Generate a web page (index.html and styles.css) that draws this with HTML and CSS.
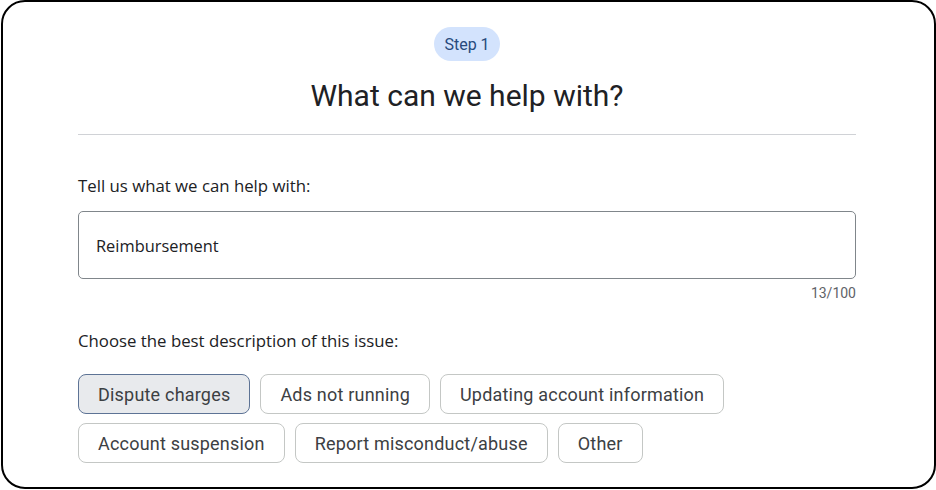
FILE: index.html
```html
<!DOCTYPE html>
<html>
<head>
<meta charset="utf-8">
<link rel="stylesheet" href="styles.css">
</head>
<body>
<div class="frame">
  <div class="header">
    <span class="step">Step 1</span>
    <h1 class="title">What can we help with?</h1>
  </div>
  <div class="content">
    <label class="label">Tell us what we can help with:</label>
    <div class="input">Reimbursement</div>
    <div class="counter">13/100</div>
    <div class="label label-choose">Choose the best description of this issue:</div>
    <div class="chips">
      <span class="chip selected">Dispute charges</span>
      <span class="chip">Ads not running</span>
      <span class="chip">Updating account information</span>
      <span class="chip">Account suspension</span>
      <span class="chip">Report misconduct/abuse</span>
      <span class="chip">Other</span>
    </div>
  </div>
</div>
</body>
</html>
```

FILE: styles.css
```css
html, body {
  margin: 0;
  padding: 0;
  background: #ffffff;
}
body {
  width: 936px;
  height: 490px;
  overflow: hidden;
  font-family: Roboto, "Liberation Sans", sans-serif;
  color: #202124;
}
.frame {
  box-sizing: border-box;
  width: 935px;
  height: 489px;
  margin-left: 1px;
  border: 2px solid #000;
  border-radius: 24px;
  padding: 25px 78px 0 75px;
}
.header {
  display: flex;
  flex-direction: column;
  align-items: center;
  border-bottom: 1px solid #d0d2d6;
  padding-bottom: 20px;
}
.step {
  display: inline-flex;
  align-items: center;
  justify-content: center;
  height: 34px;
  padding: 0 10px;
  border-radius: 17px;
  background: #d3e3fd;
  color: #274a7c;
  font-size: 16px;
}
.title {
  margin: 17px 0 0;
  font-size: 30px;
  font-weight: 400;
  line-height: 36px;
  color: #202124;
}
.content {
  display: flex;
  flex-direction: column;
  padding-top: 41px;
}
.label {
  font-family: "Open Sans", Roboto, sans-serif;
  font-size: 16.8px;
  line-height: 20px;
  color: #202124;
}
.input {
  margin-top: 15px;
  height: 68px;
  box-sizing: border-box;
  border: 1px solid #80868b;
  border-radius: 5px;
  display: flex;
  align-items: center;
  padding-left: 17px;
  font-family: "Open Sans", Roboto, sans-serif;
  font-size: 16.4px;
  color: #202124;
}
.counter {
  align-self: flex-end;
  margin-top: 6px;
  font-size: 14px;
  line-height: 16px;
  color: #5f6368;
}
.label-choose {
  margin-top: 30px;
}
.chips {
  margin-top: 23px;
  display: flex;
  flex-wrap: wrap;
  gap: 9px 10px;
  max-width: 700px;
}
.chip {
  box-sizing: border-box;
  height: 40px;
  display: inline-flex;
  align-items: center;
  padding: 0 19px;
  border: 1px solid #c4c7c5;
  border-radius: 8px;
  font-size: 18px;
  color: #3c4043;
  background: #fff;
  letter-spacing: 0.2px;
}
.chip.selected {
  background: #e8eaed;
  border-color: #5d7395;
}
```
